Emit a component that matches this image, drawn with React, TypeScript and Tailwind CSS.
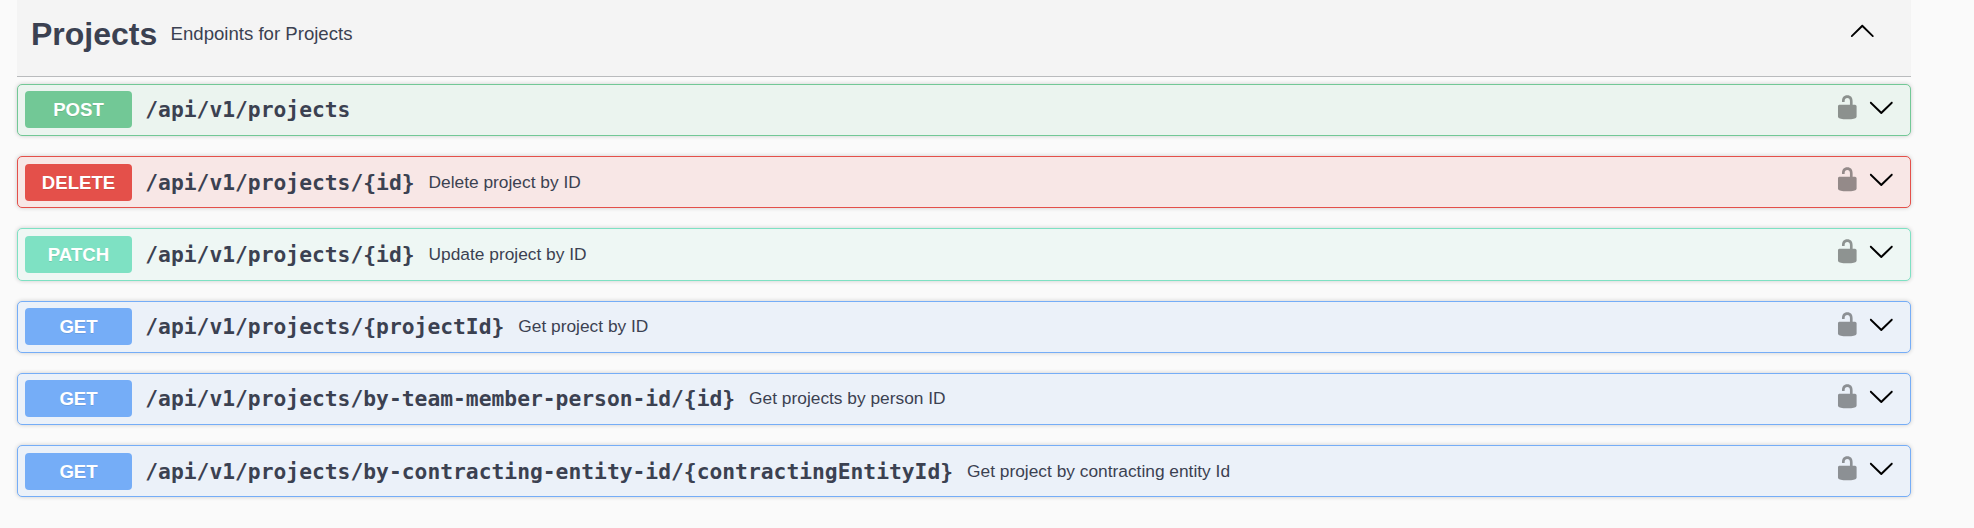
type Endpoint = {
  method: string;
  path: string;
  summary?: string;
  row: string;
  badge: string;
  offset: string;
};

const GET_ROW = 'border-[#75adf7] bg-[#ebf1f9]';
const GET_BADGE = 'bg-[#75adf7]';

const endpoints: Endpoint[] = [
  { method: 'POST', path: '/api/v1/projects', row: 'mb-5 h-[52px] border-[#72c896] bg-[#ebf4ef]', badge: 'bg-[#72c896]', offset: 'mt-1.5' },
  { method: 'DELETE', path: '/api/v1/projects/{id}', summary: 'Delete project by ID', row: 'mb-5 h-[52px] border-[#e4504a] bg-[#f8e7e6]', badge: 'bg-[#e4504a]', offset: 'mt-[7px]' },
  { method: 'PATCH', path: '/api/v1/projects/{id}', summary: 'Update project by ID', row: 'mb-5 h-[53px] border-[#7ee1c3] bg-[#eef7f4]', badge: 'bg-[#7ee1c3]', offset: 'mt-[7px]' },
  { method: 'GET', path: '/api/v1/projects/{projectId}', summary: 'Get project by ID', row: `mb-5 h-[52px] ${GET_ROW}`, badge: GET_BADGE, offset: 'mt-1.5' },
  { method: 'GET', path: '/api/v1/projects/by-team-member-person-id/{id}', summary: 'Get projects by person ID', row: `mb-5 h-[52px] ${GET_ROW}`, badge: GET_BADGE, offset: 'mt-1.5' },
  { method: 'GET', path: '/api/v1/projects/by-contracting-entity-id/{contractingEntityId}', summary: 'Get project by contracting entity Id', row: `h-[52px] ${GET_ROW}`, badge: GET_BADGE, offset: 'mt-[7px]' },
];

function ArrowUp() {
  return (
    <svg viewBox="0 0 20 20" className="size-[26.6px] shrink-0">
      <path d="M17.418 14.908c.272.268.709.268.979 0s.271-.701 0-.969l-7.908-7.83c-.27-.268-.707-.268-.979 0l-7.908 7.83c-.27.268-.27.701 0 .969.271.268.709.268.979 0L10 7.767l7.418 7.141z" />
    </svg>
  );
}

function ArrowDown() {
  return (
    <svg viewBox="0 0 20 20" className="size-[26.6px] shrink-0">
      <path d="M17.418 6.109c.272-.268.709-.268.979 0s.271.701 0 .969l-7.908 7.83c-.27.268-.707.268-.979 0l-7.908-7.83c-.27-.268-.27-.701 0-.969.271-.268.709-.268.979 0L10 13.25l7.418-7.141z" />
    </svg>
  );
}

function Unlocked() {
  return (
    <svg viewBox="0 0 20 20" className="size-[26.6px] shrink-0 opacity-40">
      <path d="M15.8 8H14V5.6C14 2.703 12.665 1 10 1 7.334 1 6 2.703 6 5.6V6h2v-.801C8 3.754 8.797 3 10 3c1.203 0 2 .754 2 2.199V8H4c-.553 0-1 .646-1 1.199V17c0 .549.428 1.139.951 1.307l1.197.387C5.672 18.861 6.55 19 7.1 19h5.8c.549 0 1.428-.139 1.951-.307l1.196-.387c.524-.167.953-.757.953-1.306V9.199C17 8.646 16.352 8 15.8 8z" />
    </svg>
  );
}

function EndpointRow({ method, path, summary, row, badge, offset }: Endpoint) {
  return (
    <div className={`flex items-start justify-between rounded-[5px] border pr-[15px] pl-[7px] shadow-[0_0_4px_rgba(0,0,0,0.19)] ${row}`}>
      <div className={`flex h-[37px] items-center whitespace-nowrap ${offset}`}>
        <div className={`flex h-[37px] w-[107px] items-center justify-center rounded-[4px] text-[18.6px] font-bold text-white [text-shadow:0_1px_0_rgba(0,0,0,0.1)] ${badge}`}>
          {method}
        </div>
        <div className="ml-[13.3px] font-['DejaVu_Sans_Mono',monospace] text-[21.3px] font-bold">{path}</div>
        {summary && <div className="ml-[14px] text-[17.33px]">{summary}</div>}
      </div>
      <div className="mt-[9px] flex gap-[7.4px]">
        <Unlocked />
        <ArrowDown />
      </div>
    </div>
  );
}

export default function App() {
  return (
    <main className="h-[528px] overflow-hidden bg-[#fafafa] pr-[63px] pl-[17px] font-['Liberation_Sans',Arial,sans-serif] text-[#3b4151]">
      <header className="mb-[7px] flex h-[77px] items-start border-b border-[#b9bbbd] bg-[#f4f4f4] pr-[35.4px] pl-[14px]">
        <h3 className="mt-[10px] text-[32px] leading-[48px] font-bold">Projects</h3>
        <p className="mt-[10px] ml-[13.3px] text-[18.6px] leading-[48px]">Endpoints for Projects</p>
        <div className="mt-[17px] ml-auto">
          <ArrowUp />
        </div>
      </header>
      {endpoints.map((endpoint) => (
        <EndpointRow key={`${endpoint.method} ${endpoint.path}`} {...endpoint} />
      ))}
    </main>
  );
}
